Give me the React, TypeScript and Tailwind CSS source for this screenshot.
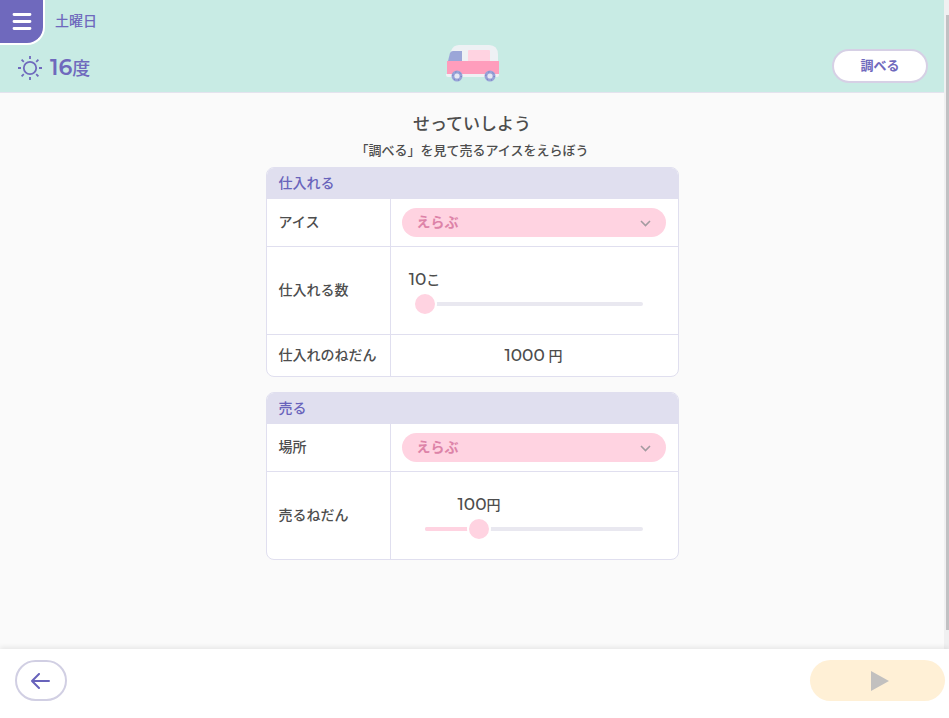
import { ReactNode, useState } from 'react';

interface SelectFieldProps {
  id: string;
  options: string[];
}

interface RangeFieldProps {
  id: string;
  min: number;
  max: number;
  step: number;
  initial: number;
  unit: string;
}

interface RowProps {
  label: ReactNode;
  className?: string;
  last?: boolean;
  children: ReactNode;
}

interface PanelProps {
  title: string;
  children: ReactNode;
}

const SunIcon = () => (
  <svg
    width="26"
    height="26"
    viewBox="0 0 26 26"
    fill="none"
    stroke="#6f69bd"
    strokeWidth="1.8"
    aria-hidden="true"
  >
    <circle cx="13" cy="12" r="6.2" />
    <path d="M13 0v3M13 21v3M1 12h3M22 12h3M4.6 3.6l2.2 2.2M19.2 18.2l2.2 2.2M4.6 20.4l2.2-2.2M19.2 5.8l2.2-2.2" />
  </svg>
);

const VanIcon = () => (
  <svg width="54" height="38" viewBox="0 0 54 38" aria-hidden="true">
    <path d="M6 6Q8 0 14 0H44Q53 0 53 10V17H3Z" fill="#eef1f4" />
    <path d="M3 16L5 8Q6 6 8 6H17V16Z" fill="#9ba6d8" />
    <path d="M23 6Q23 5 24 5H44Q45 5 45 6V16H23Z" fill="#ffd3e1" />
    <path d="M2 16H54V30H2Z" fill="#ff9dbc" />
    <path d="M1 29H54V30Q54 32 52 32H3Q1 32 1 30Z" fill="#eef1f4" />
    <circle cx="12" cy="31" r="5.5" fill="#98a3d8" />
    <circle cx="12" cy="31" r="2.6" fill="#e6e8f3" />
    <circle cx="45" cy="31" r="5.5" fill="#98a3d8" />
    <circle cx="45" cy="31" r="2.6" fill="#e6e8f3" />
    <g fill="none" strokeWidth="1" strokeDasharray="1 3.4" stroke="#6b74b8">
      <circle cx="12" cy="31" r="4.2" />
      <circle cx="45" cy="31" r="4.2" />
    </g>
  </svg>
);

const SelectField = ({ id, options }: SelectFieldProps) => (
  <div className="relative">
    <select
      id={id}
      className="block h-[29px] w-full appearance-none rounded-full bg-[#ffd3e1] pr-8 pb-[2px] pl-[15px] text-sm leading-5 font-bold text-[#dd83a8] focus:outline-none"
    >
      <option>えらぶ</option>
      {options.map((option) => (
        <option key={option}>{option}</option>
      ))}
    </select>
    <svg
      className="pointer-events-none absolute top-3 right-[15px]"
      width="11"
      height="7"
      viewBox="0 0 11 7"
      fill="none"
      stroke="#a39ba0"
      strokeWidth="1.6"
      aria-hidden="true"
    >
      <path d="M1 1l4.5 4.5L10 1" />
    </svg>
  </div>
);

const RangeField = ({ id, min, max, step, initial, unit }: RangeFieldProps) => {
  const [value, setValue] = useState<number>(initial);
  const percent = ((value - min) / (max - min)) * 100;

  return (
    <div className="px-[11px] pt-[2px]">
      <div className="relative mx-3 h-[25px]">
        <output
          htmlFor={id}
          className="absolute -translate-x-1/2 whitespace-nowrap text-sm leading-6 font-medium"
          style={{ left: `${percent}%` }}
        >
          <span className="text-[17px]">{value}</span>
          {unit}
        </output>
      </div>
      <div className="relative h-6">
        <div className="absolute inset-x-3 top-[10px] h-1 overflow-hidden rounded-full bg-[#e9e8f0]">
          <div className="h-full bg-[#ffd3e1]" style={{ width: `${percent}%` }} />
        </div>
        <input
          id={id}
          type="range"
          min={min}
          max={max}
          step={step}
          value={value}
          onChange={(e) => setValue(Number(e.target.value))}
          className="relative block h-6 w-full cursor-pointer appearance-none bg-transparent focus:outline-none [&::-webkit-slider-thumb]:size-6 [&::-webkit-slider-thumb]:appearance-none [&::-webkit-slider-thumb]:rounded-full [&::-webkit-slider-thumb]:border-2 [&::-webkit-slider-thumb]:border-white [&::-webkit-slider-thumb]:bg-[#ffd3e1]"
        />
      </div>
    </div>
  );
};

const Row = ({ label, className = '', last = false, children }: RowProps) => {
  const border = last ? '' : 'border-b';

  return (
    <tr className={className}>
      <th
        scope="row"
        className={`w-[124px] border-r border-[#e0dfef] pb-[2px] pl-3 text-left font-medium ${border}`}
      >
        {label}
      </th>
      <td className={`border-[#e0dfef] pr-3 pl-[11px] ${border}`}>
        {children}
      </td>
    </tr>
  );
};

const Panel = ({ title, children }: PanelProps) => (
  <div className="overflow-hidden rounded-lg border border-[#e0dfef] bg-white">
    <table className="w-full border-separate border-spacing-0 text-sm leading-5">
      <thead>
        <tr className="h-[31px] bg-[#e0dfef]">
          <th
            colSpan={2}
            className="pb-[2px] pl-3 text-left font-medium text-[#6863bb]"
          >
            {title}
          </th>
        </tr>
      </thead>
      <tbody>{children}</tbody>
    </table>
  </div>
);

const Header = () => (
  <header className="border-b border-[#e4e3ee] bg-[#c8ebe4] text-[#6f69bd]">
    <div className="flex items-start gap-[10px]">
      <button
        type="button"
        aria-label="メニュー"
        className="flex h-[45px] w-[45px] items-center justify-center rounded-br-[18px] border-r-2 border-b-2 border-white bg-[#6f69bd]"
      >
        <svg
          width="20"
          height="17"
          viewBox="0 0 20 17"
          stroke="#fff"
          strokeWidth="2.8"
          strokeLinecap="round"
          aria-hidden="true"
        >
          <path d="M2 1.5h16M2 8.5h16M2 15.5h16" />
        </svg>
      </button>
      <p className="pt-[11px] text-sm leading-5 font-medium">土曜日</p>
    </div>
    <div className="grid h-[47px] grid-cols-3 items-start pr-4 pl-[17px]">
      <p className="flex items-center gap-[7px] text-lg leading-[46px] font-medium">
        <SunIcon />
        <span>
          <span className="text-[22px] font-semibold">16</span>度
        </span>
      </p>
      <div className="justify-self-center">
        <VanIcon />
      </div>
      <button
        type="button"
        className="mt-1 h-[34px] w-24 justify-self-end rounded-full border-2 border-[#d6d0e5] bg-white pb-[2px] text-[13px] leading-5 font-bold"
      >
        調べる
      </button>
    </div>
  </header>
);

const Footer = () => (
  <footer className="flex h-[69px] shrink-0 items-start justify-between bg-white pt-[11px] pr-1 pl-[15px] shadow-[0_-2px_5px_rgba(0,0,0,0.08)]">
    <button
      type="button"
      aria-label="もどる"
      className="flex h-[41px] w-[52px] items-center justify-center rounded-full border-2 border-[#d1cfe3]"
    >
      <svg
        width="20"
        height="16"
        viewBox="0 0 20 16"
        fill="none"
        stroke="#6863bb"
        strokeWidth="2"
        strokeLinecap="round"
        strokeLinejoin="round"
        aria-hidden="true"
      >
        <path d="M18 8H1M8 1L1 8l7 7" />
      </svg>
    </button>
    <button
      type="button"
      disabled
      aria-label="すすむ"
      className="flex h-[41px] w-[135px] items-center justify-center rounded-full bg-[#fff0d6] pl-1"
    >
      <svg width="18" height="20" viewBox="0 0 18 20" aria-hidden="true">
        <path d="M0 0L18 10L0 20Z" fill="#c2c0bf" />
      </svg>
    </button>
  </footer>
);

const App = () => {
  return (
    <div className="flex h-screen flex-col bg-[#fafafa] font-[Montserrat,Inter,'Noto_Sans_CJK_JP',sans-serif] text-[#4d4d4d]">
      <div className="flex min-h-0 flex-1">
        <div className="min-w-0 flex-1 overflow-hidden">
          <Header />
          <main className="mx-auto w-full max-w-[413px] pt-[19px]">
            <h1 className="text-center text-[17px] leading-6 font-medium">
              せっていしよう
            </h1>
            <p className="pt-1 pb-[7px] text-center text-[13px] leading-5 font-medium">
              「調べる」を見て売るアイスをえらぼう
            </p>
            <div className="flex flex-col gap-[15px]">
              <Panel title="仕入れる">
                <Row
                  className="h-12"
                  label={<label htmlFor="ice">アイス</label>}
                >
                  <SelectField id="ice" options={['バニラ', 'チョコ', 'いちご']} />
                </Row>
                <Row
                  className="h-[88px]"
                  label={<label htmlFor="amount">仕入れる数</label>}
                >
                  <RangeField
                    id="amount"
                    min={10}
                    max={100}
                    step={10}
                    initial={10}
                    unit="こ"
                  />
                </Row>
                <Row className="h-[41px]" label="仕入れのねだん" last>
                  <p className="text-center font-medium">
                    <span className="text-[17px]">1000</span> 円
                  </p>
                </Row>
              </Panel>
              <Panel title="売る">
                <Row
                  className="h-12"
                  label={<label htmlFor="place">場所</label>}
                >
                  <SelectField id="place" options={['公園', '海', '駅前']} />
                </Row>
                <Row
                  className="h-[87px]"
                  label={<label htmlFor="price">売るねだん</label>}
                  last
                >
                  <RangeField
                    id="price"
                    min={50}
                    max={250}
                    step={10}
                    initial={100}
                    unit="円"
                  />
                </Row>
              </Panel>
            </div>
          </main>
        </div>
        <div className="w-[5px] shrink-0 bg-[#f0f0f1] pt-[15px] pb-[19px] pl-[2px]">
          <div className="h-full bg-[#c1c1c3]" />
        </div>
      </div>
      <Footer />
    </div>
  );
};

export default App;
